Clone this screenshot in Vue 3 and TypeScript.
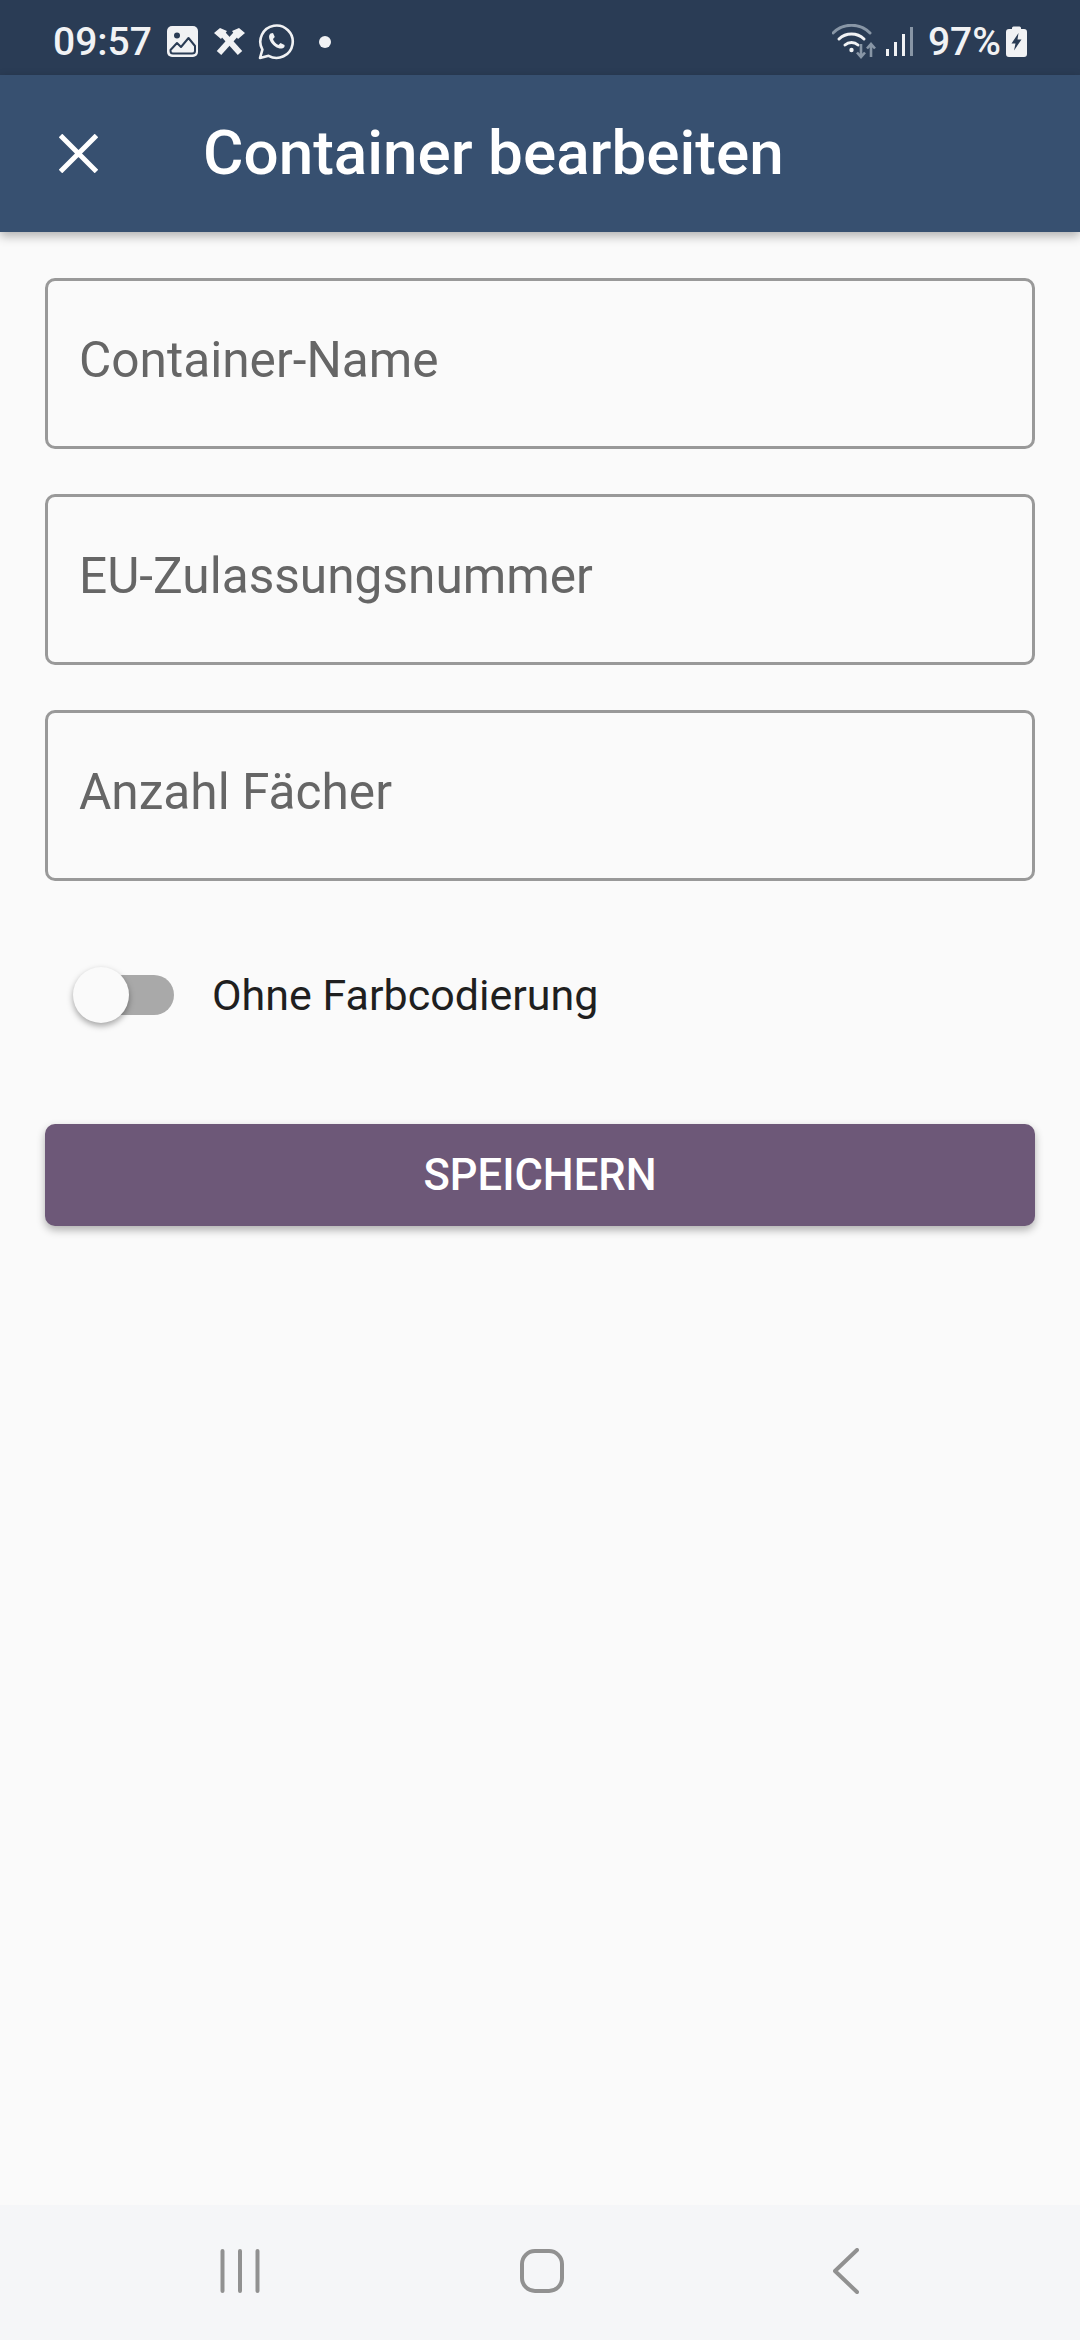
<template>
  <div class="screen">
    <div class="status">
      <div class="status-left">
        <span class="time">09:57</span>
        <svg class="ic-image" width="31" height="31" viewBox="0 0 31 31">
          <rect width="31" height="31" rx="5" fill="#f1f2f4" />
          <circle cx="10" cy="9.5" r="3" fill="#2a3c55" />
          <path d="M3.5 24 L10 17 L14 21 L21.5 12 L28 20 V25 Q28 27.5 25 27.5 H6 Q3.5 27.5 3.5 25 Z" fill="none" stroke="#2a3c55" stroke-width="2" stroke-linejoin="round" />
        </svg>
        <svg class="ic-tools" width="33" height="29" viewBox="0 0 33 29">
          <path d="M6 26 L24 6" stroke="#f1f2f4" stroke-width="6" />
          <path d="M27 26 L9 6" stroke="#f1f2f4" stroke-width="6" />
          <path d="M1 6 L7 1 L14 4 L8 12 Z M32 6 L26 1 L19 4 L25 12 Z" fill="#f1f2f4" />
        </svg>
        <svg class="ic-wa" width="37" height="37" viewBox="0 0 37 37">
          <path d="M2 35 L4.4 26.6 A16.2 16.2 0 1 1 10.6 32.8 Z" fill="none" stroke="#f1f2f4" stroke-width="2.6" stroke-linejoin="round" />
          <path d="M12.5 10.5 C10.5 12 10.5 15 12.5 18.5 C15 23 20 26 24 25.5 C26 25.2 27 23.5 26.5 22 L22.5 20 L20.5 22 C18 21 15.5 18 15 16 L16.8 14 L15 10 Z" fill="#f1f2f4" />
        </svg>
        <span class="dot"></span>
      </div>
      <div class="status-right">
        <svg class="ic-wifi" width="44" height="36" viewBox="0 0 44 36">
          <path d="M1 9 A26 26 0 0 1 38 9" fill="none" stroke="#8896a6" stroke-width="3" stroke-linecap="round" />
          <path d="M7 15 A18 18 0 0 1 32 15" fill="none" stroke="#f1f2f4" stroke-width="3" stroke-linecap="round" />
          <path d="M13 21 A9.5 9.5 0 0 1 26 21" fill="none" stroke="#f1f2f4" stroke-width="3" stroke-linecap="round" />
          <circle cx="19.5" cy="26" r="2.2" fill="#f1f2f4" />
          <path d="M29 20 V32 M25 28.5 L29 33 L33 28.5" fill="none" stroke="#8896a6" stroke-width="2.6" />
          <path d="M39 33 V20 M35 24.5 L39 20 L43 24.5" fill="none" stroke="#8896a6" stroke-width="2.6" />
        </svg>
        <div class="bars">
          <i class="bar" style="height: 7px"></i>
          <i class="bar" style="height: 14px"></i>
          <i class="bar" style="height: 22px"></i>
          <i class="bar dim" style="height: 29px"></i>
        </div>
        <span class="pct">97%</span>
        <svg class="ic-batt" width="21" height="31" viewBox="0 0 21 31">
          <path d="M6 3 V2 Q6 0.5 7.5 0.5 H13.5 Q15 0.5 15 2 V3 H18 Q21 3 21 6 V28 Q21 31 18 31 H3 Q0 31 0 28 V6 Q0 3 3 3 Z" fill="#f1f2f4" />
          <path d="M12.5 7 L5.5 17.5 H9.5 L8 24.5 L15.5 13.5 H11.5 Z" fill="#2a3c55" />
        </svg>
      </div>
    </div>

    <header class="appbar">
      <svg class="close" width="39" height="39" viewBox="0 0 39 39">
        <path d="M1.5 1.5 L37.5 37.5 M37.5 1.5 L1.5 37.5" stroke="#fff" stroke-width="5" />
      </svg>
      <h1 class="title">Container bearbeiten</h1>
    </header>

    <main class="form">
      <input v-for="f in fields" :key="f" class="field" :placeholder="f" />

      <div class="toggle-row">
        <div class="switch">
          <span class="track"></span>
          <span class="thumb"></span>
        </div>
        <span class="toggle-label">Ohne Farbcodierung</span>
      </div>

      <button class="save">SPEICHERN</button>
    </main>

    <nav class="navbar">
      <svg width="40" height="44" viewBox="0 0 40 44">
        <path d="M2.5 2 V42 M20 2 V42 M37.5 2 V42" stroke="#919191" stroke-width="4" stroke-linecap="round" />
      </svg>
      <svg width="44" height="44" viewBox="0 0 44 44">
        <rect x="2" y="2" width="40" height="40" rx="13" fill="none" stroke="#919191" stroke-width="4" />
      </svg>
      <svg width="26" height="46" viewBox="0 0 26 46">
        <path d="M24 2 L2 23 L24 44" fill="none" stroke="#919191" stroke-width="4" stroke-linecap="round" stroke-linejoin="round" />
      </svg>
    </nav>
  </div>
</template>

<script setup lang="ts">
const fields: string[] = ["Container-Name", "EU-Zulassungsnummer", "Anzahl Fächer"];
</script>

<style>
html, body { margin: 0; background: #fafafa; }
</style>

<style scoped>
.screen {
  width: 1080px;
  height: 2340px;
  display: flex;
  flex-direction: column;
  background: #fafafa;
  font-family: Roboto, "Liberation Sans", sans-serif;
  overflow: hidden;
}

.status {
  height: 75px;
  flex: none;
  display: flex;
  align-items: center;
  justify-content: space-between;
  padding: 8px 53px 0 53px;
  box-sizing: border-box;
  background: #2a3c55;
  color: #f1f2f4;
}
.status-left, .status-right { display: flex; align-items: center; }
.time { font-size: 39px; font-weight: 500; line-height: 40px; }
.ic-image { margin-left: 15px; }
.ic-tools { margin-left: 15px; }
.ic-wa { margin-left: 12px; }
.dot { width: 12px; height: 12px; margin-left: 24px; border-radius: 50%; background: #f1f2f4; }
.ic-wifi { margin-right: 10px; }
.bars { display: flex; align-items: flex-end; gap: 5px; height: 29px; }
.bar { display: block; width: 3px; background: #f1f2f4; }
.bar.dim { background: #8896a6; }
.pct { margin-left: 15px; font-size: 39px; font-weight: 500; line-height: 40px; }
.ic-batt { margin-left: 5px; }

.appbar {
  height: 157px;
  flex: none;
  display: flex;
  align-items: center;
  padding-left: 59px;
  background: #375070;
  box-shadow: 0 4px 10px rgba(0, 0, 0, 0.3);
  position: relative;
  z-index: 1;
}
.title {
  margin: 0 0 3px 105px;
  font-size: 62px;
  font-weight: 500;
  color: #fff;
}

.form {
  flex: 1;
  display: flex;
  flex-direction: column;
  padding: 46px 45px 0;
}
.field {
  height: 171px;
  flex: none;
  margin-bottom: 45px;
  padding: 0 31px 8px;
  box-sizing: border-box;
  border: 3px solid #999;
  border-radius: 10px;
  background: transparent;
  font-family: inherit;
  font-size: 49.6px;
  outline: none;
}
.field::placeholder { color: #666; opacity: 1; }

.toggle-row {
  display: flex;
  align-items: center;
  height: 56px;
  margin-top: 41px;
}
.switch { position: relative; width: 101px; height: 56px; margin-left: 28px; }
.track {
  position: absolute;
  left: 8px;
  right: 0;
  top: 8px;
  height: 40px;
  border-radius: 20px;
  background: #a9a9a9;
}
.thumb {
  position: absolute;
  left: 0;
  top: 0;
  width: 56px;
  height: 56px;
  border-radius: 50%;
  background: #fafafa;
  box-shadow: 0 3px 6px rgba(0, 0, 0, 0.35);
}
.toggle-label {
  margin-left: 38px;
  font-size: 43px;
  color: #1f1f1f;
}

.save {
  height: 102px;
  margin-top: 101px;
  border: 0;
  border-radius: 10px;
  background: #6d5878;
  color: #fff;
  font-family: inherit;
  font-size: 43.5px;
  font-weight: 500;
  box-shadow: 0 4px 8px rgba(0, 0, 0, 0.3);
}

.navbar {
  height: 135px;
  flex: none;
  display: flex;
  align-items: center;
  padding-bottom: 3px;
  box-sizing: border-box;
  background: #f5f6f8;
}
.navbar svg:nth-child(1) { margin-left: 220px; }
.navbar svg:nth-child(2) { margin-left: 260px; }
.navbar svg:nth-child(3) { margin-left: 269px; }
</style>
